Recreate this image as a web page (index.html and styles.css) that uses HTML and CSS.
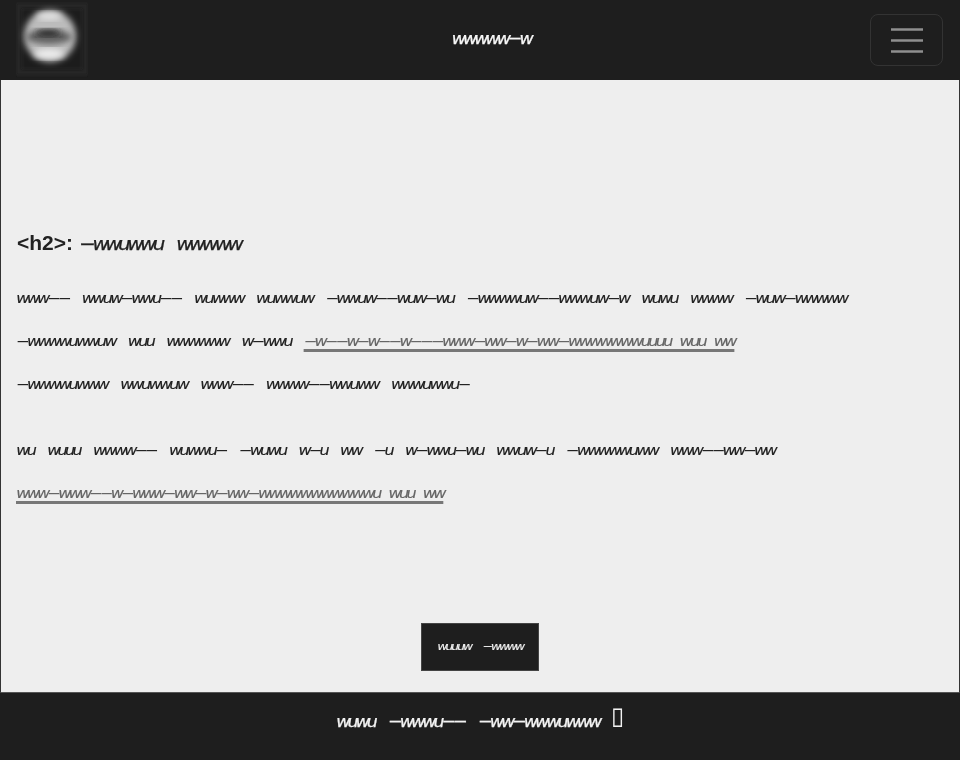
FILE: index.html
```html
<!DOCTYPE html>
<html lang="en">
<head>
<meta charset="utf-8">
<title>Page</title>
<link rel="stylesheet" href="styles.css">
</head>
<body>
<header class="navbar">
  <a class="logo" href="#" aria-label="Logo">
    <svg width="72" height="76" viewBox="0 0 72 76">
      <defs>
        <filter id="soft" x="-20%" y="-20%" width="140%" height="140%"><feGaussianBlur stdDeviation="3"/></filter>
        <filter id="softer" x="-20%" y="-20%" width="140%" height="140%"><feGaussianBlur stdDeviation="1.8"/></filter>
      </defs>
      <rect x="0" y="1" width="72" height="72" fill="#252525" filter="url(#softer)"/>
      <rect x="6" y="7" width="60" height="60" fill="#1e1e1e" filter="url(#softer)"/>
      <circle cx="34" cy="34" r="26" fill="#bcbcbc" filter="url(#soft)"/>
      <ellipse cx="33" cy="14" rx="13" ry="4" fill="#e4e4e4" filter="url(#soft)"/>
      <ellipse cx="33" cy="52" rx="15" ry="5" fill="#eeeeee" filter="url(#soft)"/>
      <ellipse cx="33" cy="35" rx="23" ry="7" fill="#5e5e5e" filter="url(#soft)"/>
      <ellipse cx="32" cy="31" rx="13" ry="3" fill="#222222" filter="url(#soft)"/>
    </svg>
  </a>
  <span class="brand scribble">ʷʷʷʷʷ⁻ʷ</span>
  <button class="toggler" aria-label="Menu">
    <svg width="32" height="26" viewBox="0 0 32 26"><path d="M0 2.5h32M0 13.5h32M0 24.5h32" stroke="#8f8f8f" stroke-width="2.6"/></svg>
  </button>
</header>
<main class="content">
  <h2 class="heading">&lt;h2&gt;:<span class="scribble">⁻ʷʷᵘʷʷᵘ ʷʷʷʷʷ</span></h2>
  <p class="para scribble">ʷʷʷ⁻⁻ ʷʷᵘʷ⁻ʷʷᵘ⁻⁻ ʷᵘʷʷʷ ʷᵘʷʷᵘʷ ⁻ʷʷᵘʷ⁻⁻ʷᵘʷ⁻ʷᵘ ⁻ʷʷʷʷᵘʷ⁻⁻ʷʷʷᵘʷ⁻ʷ ʷᵘʷᵘ ʷʷʷʷ ⁻ʷᵘʷ⁻ʷʷʷʷʷ<br>
  ⁻ʷʷʷʷᵘʷʷᵘʷ ʷᵘᵘ ʷʷʷʷʷʷ ʷ⁻ʷʷᵘ <a href="#" class="link">⁻ʷ⁻⁻ʷ⁻ʷ⁻⁻ʷ⁻⁻⁻ʷʷʷ⁻ʷʷ⁻ʷ⁻ʷʷ⁻ʷʷʷʷʷʷʷᵘᵘᵘᵘ ʷᵘᵘ ʷʷ</a><br>
  ⁻ʷʷʷʷᵘʷʷʷ ʷʷᵘʷʷᵘʷ ʷʷʷ⁻⁻ ʷʷʷʷ⁻⁻ʷʷᵘʷʷ ʷʷʷᵘʷʷᵘ⁻</p>
  <p class="para scribble">ʷᵘ ʷᵘᵘᵘ ʷʷʷʷ⁻⁻ ʷᵘʷʷᵘ⁻ ⁻ʷᵘʷᵘ ʷ⁻ᵘ ʷʷ ⁻ᵘ ʷ⁻ʷʷᵘ⁻ʷᵘ ʷʷᵘʷ⁻ᵘ ⁻ʷʷʷʷʷᵘʷʷ ʷʷʷ⁻⁻ʷʷ⁻ʷʷ<br>
  <a href="#" class="link">ʷʷʷ⁻ʷʷʷ⁻⁻ʷ⁻ʷʷʷ⁻ʷʷ⁻ʷ⁻ʷʷ⁻ʷʷʷʷʷʷʷʷʷʷʷᵘ ʷᵘᵘ ʷʷ</a></p>
  <div class="actions"><a href="#" class="button"><span class="scribble">ʷᵘᵘᵘʷ ⁻ʷʷʷʷ</span></a></div>
</main>
<footer class="footer">
  <span class="scribble">ʷᵘʷᵘ ⁻ʷʷʷᵘ⁻⁻ ⁻ʷʷ⁻ʷʷʷᵘʷʷʷ</span>
  <span class="tofu">&#x25AF;</span>
</footer>
</body>
</html>
```
FILE: styles.css
```css
* { box-sizing: border-box; }
html, body { margin: 0; padding: 0; }
body {
  width: 960px;
  height: 760px;
  display: flex;
  flex-direction: column;
  overflow: hidden;
  font-family: "Liberation Sans", Arial, sans-serif;
  background: #eee;
  color: #1e1e1e;
}
.scribble {
  font-family: "DejaVu Sans", sans-serif;
  font-style: italic;
  font-size: 26px;
  letter-spacing: -3px;
  word-spacing: 7.7px;
  font-weight: 400;
  -webkit-text-stroke: 0.12px currentColor;
  will-change: opacity;
}
.navbar {
  height: 80px;
  flex: none;
  display: flex;
  align-items: center;
  padding: 0 17px 0 16px;
  background: #1e1e1e;
  color: #eee;
}
.logo { display: block; height: 76px; }
.brand {
  margin: 8px auto 0;
  padding-left: 24px;
  color: #f6f6f6;
  font-size: 28px;
  letter-spacing: -3.2px;
  line-height: 1;
  -webkit-text-stroke: 0.25px currentColor;
}
.toggler {
  width: 73px;
  height: 52px;
  padding: 0;
  display: flex;
  align-items: center;
  justify-content: center;
  background: transparent;
  border: 1px solid #333;
  border-radius: 8px;
}
.content {
  flex: 1;
  display: flex;
  flex-direction: column;
  padding: 150px 16px 21px;
  background: #eee;
  border-left: 1px solid #333;
  border-right: 1px solid #333;
  border-bottom: 1px solid #555;
}
.heading {
  margin: 0 0 26px;
  font-size: 21px;
  font-weight: 700;
  line-height: 26px;
  color: #222;
  will-change: opacity;
}
.heading .scribble {
  margin-left: 6px;
  font-size: 32px;
  letter-spacing: -3.7px;
  line-height: 0;
  vertical-align: -11px;
  -webkit-text-stroke: 0.25px currentColor;
}
.para {
  margin: 0 0 22px -1px;
  line-height: 43.2px;
  color: #222;
}
.link {
  color: #666;
  word-spacing: 3.5px;
  text-decoration: underline #777;
  text-decoration-thickness: 2.5px;
  text-decoration-skip-ink: none;
  text-underline-offset: -6px;
}
.actions { margin-top: auto; display: flex; justify-content: center; }
.button {
  display: flex;
  align-items: center;
  justify-content: center;
  width: 118px;
  height: 48px;
  padding-top: 6px;
  background: #1e1e1e;
  border: 1px solid #444;
  color: #eee;
  text-decoration: none;
}
.button .scribble {
  font-size: 20px;
  letter-spacing: -2.3px;
}
.footer {
  flex: none;
  height: 67px;
  display: flex;
  align-items: center;
  justify-content: center;
  gap: 12px;
  padding-bottom: 14px;
  background: #1e1e1e;
  color: #f2f2f2;
}
.footer .scribble {
  margin-top: 14px;
  font-size: 28px;
  letter-spacing: -3.2px;
  -webkit-text-stroke: 0.25px currentColor;
}
.tofu { margin-bottom: 8px; font-size: 24px; line-height: 1; will-change: opacity; }
```
